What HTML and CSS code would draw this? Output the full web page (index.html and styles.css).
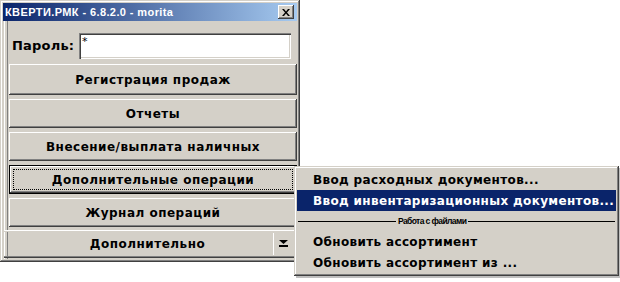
FILE: index.html
```html
<!DOCTYPE html>
<html lang="ru">
<head>
	<meta charset="UTF-8">
	<title>КВЕРТИ.РМК</title>
	<link rel="stylesheet" href="styles.css">
</head>
<body>
	<div class="window">
		<div class="titlebar">
			<span class="title">КВЕРТИ.РМК - 6.8.2.0 - morita</span>
			<span class="close">
				<svg width="8" height="7" viewBox="0 0 8 7"><path d="M0 0h2l2 2.5L6 0h2L5 3.5 8 7H6L4 4.5 2 7H0l3-3.5z" fill="#000"/></svg>
			</span>
		</div>
		<div class="panel">
			<div class="login">
				<span class="label">Пароль:</span>
				<div class="input">*</div>
			</div>
			<div class="buttons">
				<div class="btn tall">Регистрация продаж</div>
				<div class="btn">Отчеты</div>
				<div class="btn">Внесение/выплата наличных</div>
				<div class="btn focused"><span class="focus">Дополнительные операции</span></div>
				<div class="btn">Журнал операций</div>
			</div>
			<div class="more">
				<span class="more-text">Дополнительно</span>
				<span class="drop">
					<svg width="9" height="7" viewBox="0 0 9 7"><path d="M0 0h9L4.5 4z" fill="#000"/><rect x="0" y="5" width="9" height="2" fill="#000"/></svg>
				</span>
			</div>
		</div>
	</div>

	<!-- всплывающее меню -->
	<div class="menu">
		<div class="item">Ввод расходных документов...</div>
		<div class="item active">Ввод инвентаризационных документов...</div>
		<div class="sep"><span>Работа с файлами</span></div>
		<div class="item">Обновить ассортимент</div>
		<div class="item">Обновить ассортимент из ...</div>
	</div>
</body>
</html>
```

FILE: styles.css
```css
*{
	padding: 0;
	margin: 0;
	box-sizing: border-box;
}
body{
	background: #fff;
	font-family: "DejaVu Sans", sans-serif;
	font-weight: bold;
	font-size: 12px;
	letter-spacing: 0.5px;
	color: #000;
	position: relative;
	width: 620px;
	height: 282px;
	overflow: hidden;
	white-space: nowrap;
}
.window{
	width: 300px;
	height: 262px;
	background: #d4d0c8;
	padding: 3px 3px 3px 3px;
	box-shadow: inset -1px -1px #404040, inset 1px 1px #d4d0c8, inset -2px -2px #808080, inset 2px 2px #fff;
	display: flex;
	flex-direction: column;
}
.titlebar{
	height: 18px;
	background: linear-gradient(to right, #0a246a, #a6caf0);
	display: flex;
	align-items: center;
	justify-content: space-between;
	padding: 0 3px 0 2px;
}
.title{
	color: #fff;
	font-family: "Liberation Sans", sans-serif;
	font-size: 11px;
	letter-spacing: 0.4px;
	font-weight: bold;
}
.close{
	width: 16px;
	height: 14px;
	background: #d4d0c8;
	display: flex;
	align-items: center;
	justify-content: center;
	box-shadow: inset -1px -1px #404040, inset 1px 1px #fff, inset -2px -2px #808080;
}
.panel{
	flex: 1;
	margin-left: 1px;
	box-shadow: inset 1px 0 #fff, inset 3px 0 #d4d0c8, inset 4px 0 #808080;
	display: flex;
	flex-direction: column;
}
.login{
	display: flex;
	align-items: center;
	padding: 10px 6px 0 8px;
	height: 39px;
}
.label{
	font-size: 13px;
	letter-spacing: 0.2px;
	width: 67px;
}
.input{
	width: 212px;
	height: 26px;
	background: #fff;
	font-weight: normal;
	font-size: 11px;
	padding: 2px 3px;
	box-shadow: inset 1px 1px #808080, inset 2px 2px #404040, inset -1px -1px #fff, inset -2px -2px #d4d0c8;
}
.buttons{
	display: flex;
	flex-direction: column;
	gap: 4px;
	padding: 4px 0 0 5px;
}
.btn{
	height: 29px;
	display: flex;
	align-items: center;
	justify-content: center;
	box-shadow: inset -1px -1px #404040, inset 1px 1px #fff, inset -2px -2px #808080;
}
.tall{
	height: 31px;
}
.focused{
	box-shadow: inset 0 0 0 1px #000, inset -2px -2px #404040, inset 2px 2px #fff, inset -3px -3px #808080;
	padding: 4px;
}
.focus{
	flex: 1;
	align-self: stretch;
	display: flex;
	align-items: center;
	justify-content: center;
	outline: 1px dotted #000;
	outline-offset: -1px;
}
.more{
	margin-top: 3px;
	height: 28px;
	display: flex;
	align-items: center;
	padding: 2px 3px 3px 0;
	box-shadow: inset 0 1px #fff, inset 0 2px #d4d0c8, inset 0 -1px #404040, inset 0 -2px #808080;
}
.more-text{
	flex: 1;
	text-align: center;
	padding-left: 18px;
}
.drop{
	width: 21px;
	height: 22px;
	display: flex;
	align-items: center;
	justify-content: center;
	box-shadow: inset 1px 0 #fff;
}
.menu{
	position: absolute;
	left: 294px;
	top: 166px;
	width: 325px;
	padding: 3px 3px 3px 3px;
	background: #d4d0c8;
	letter-spacing: 0.35px;
	box-shadow: inset -1px -1px #404040, inset 1px 1px #d4d0c8, inset -2px -2px #808080, inset 2px 2px #fff, 2px 2px 0 rgba(0,0,0,0.25);
}
.item{
	height: 21px;
	line-height: 22px;
	padding-left: 16px;
	overflow: hidden;
}
.active{
	background: #0a246a;
	color: #fff;
}
.sep{
	height: 20px;
	display: flex;
	align-items: center;
	gap: 2px;
	padding: 0 1px;
	font-family: "Liberation Sans", sans-serif;
	font-size: 8.5px;
	letter-spacing: -0.6px;
}
.sep::before, .sep::after{
	content: "";
	flex: 1;
	border-top: 1px solid #000;
}
.sep::before{
	flex: 0 0 98px;
}
```
